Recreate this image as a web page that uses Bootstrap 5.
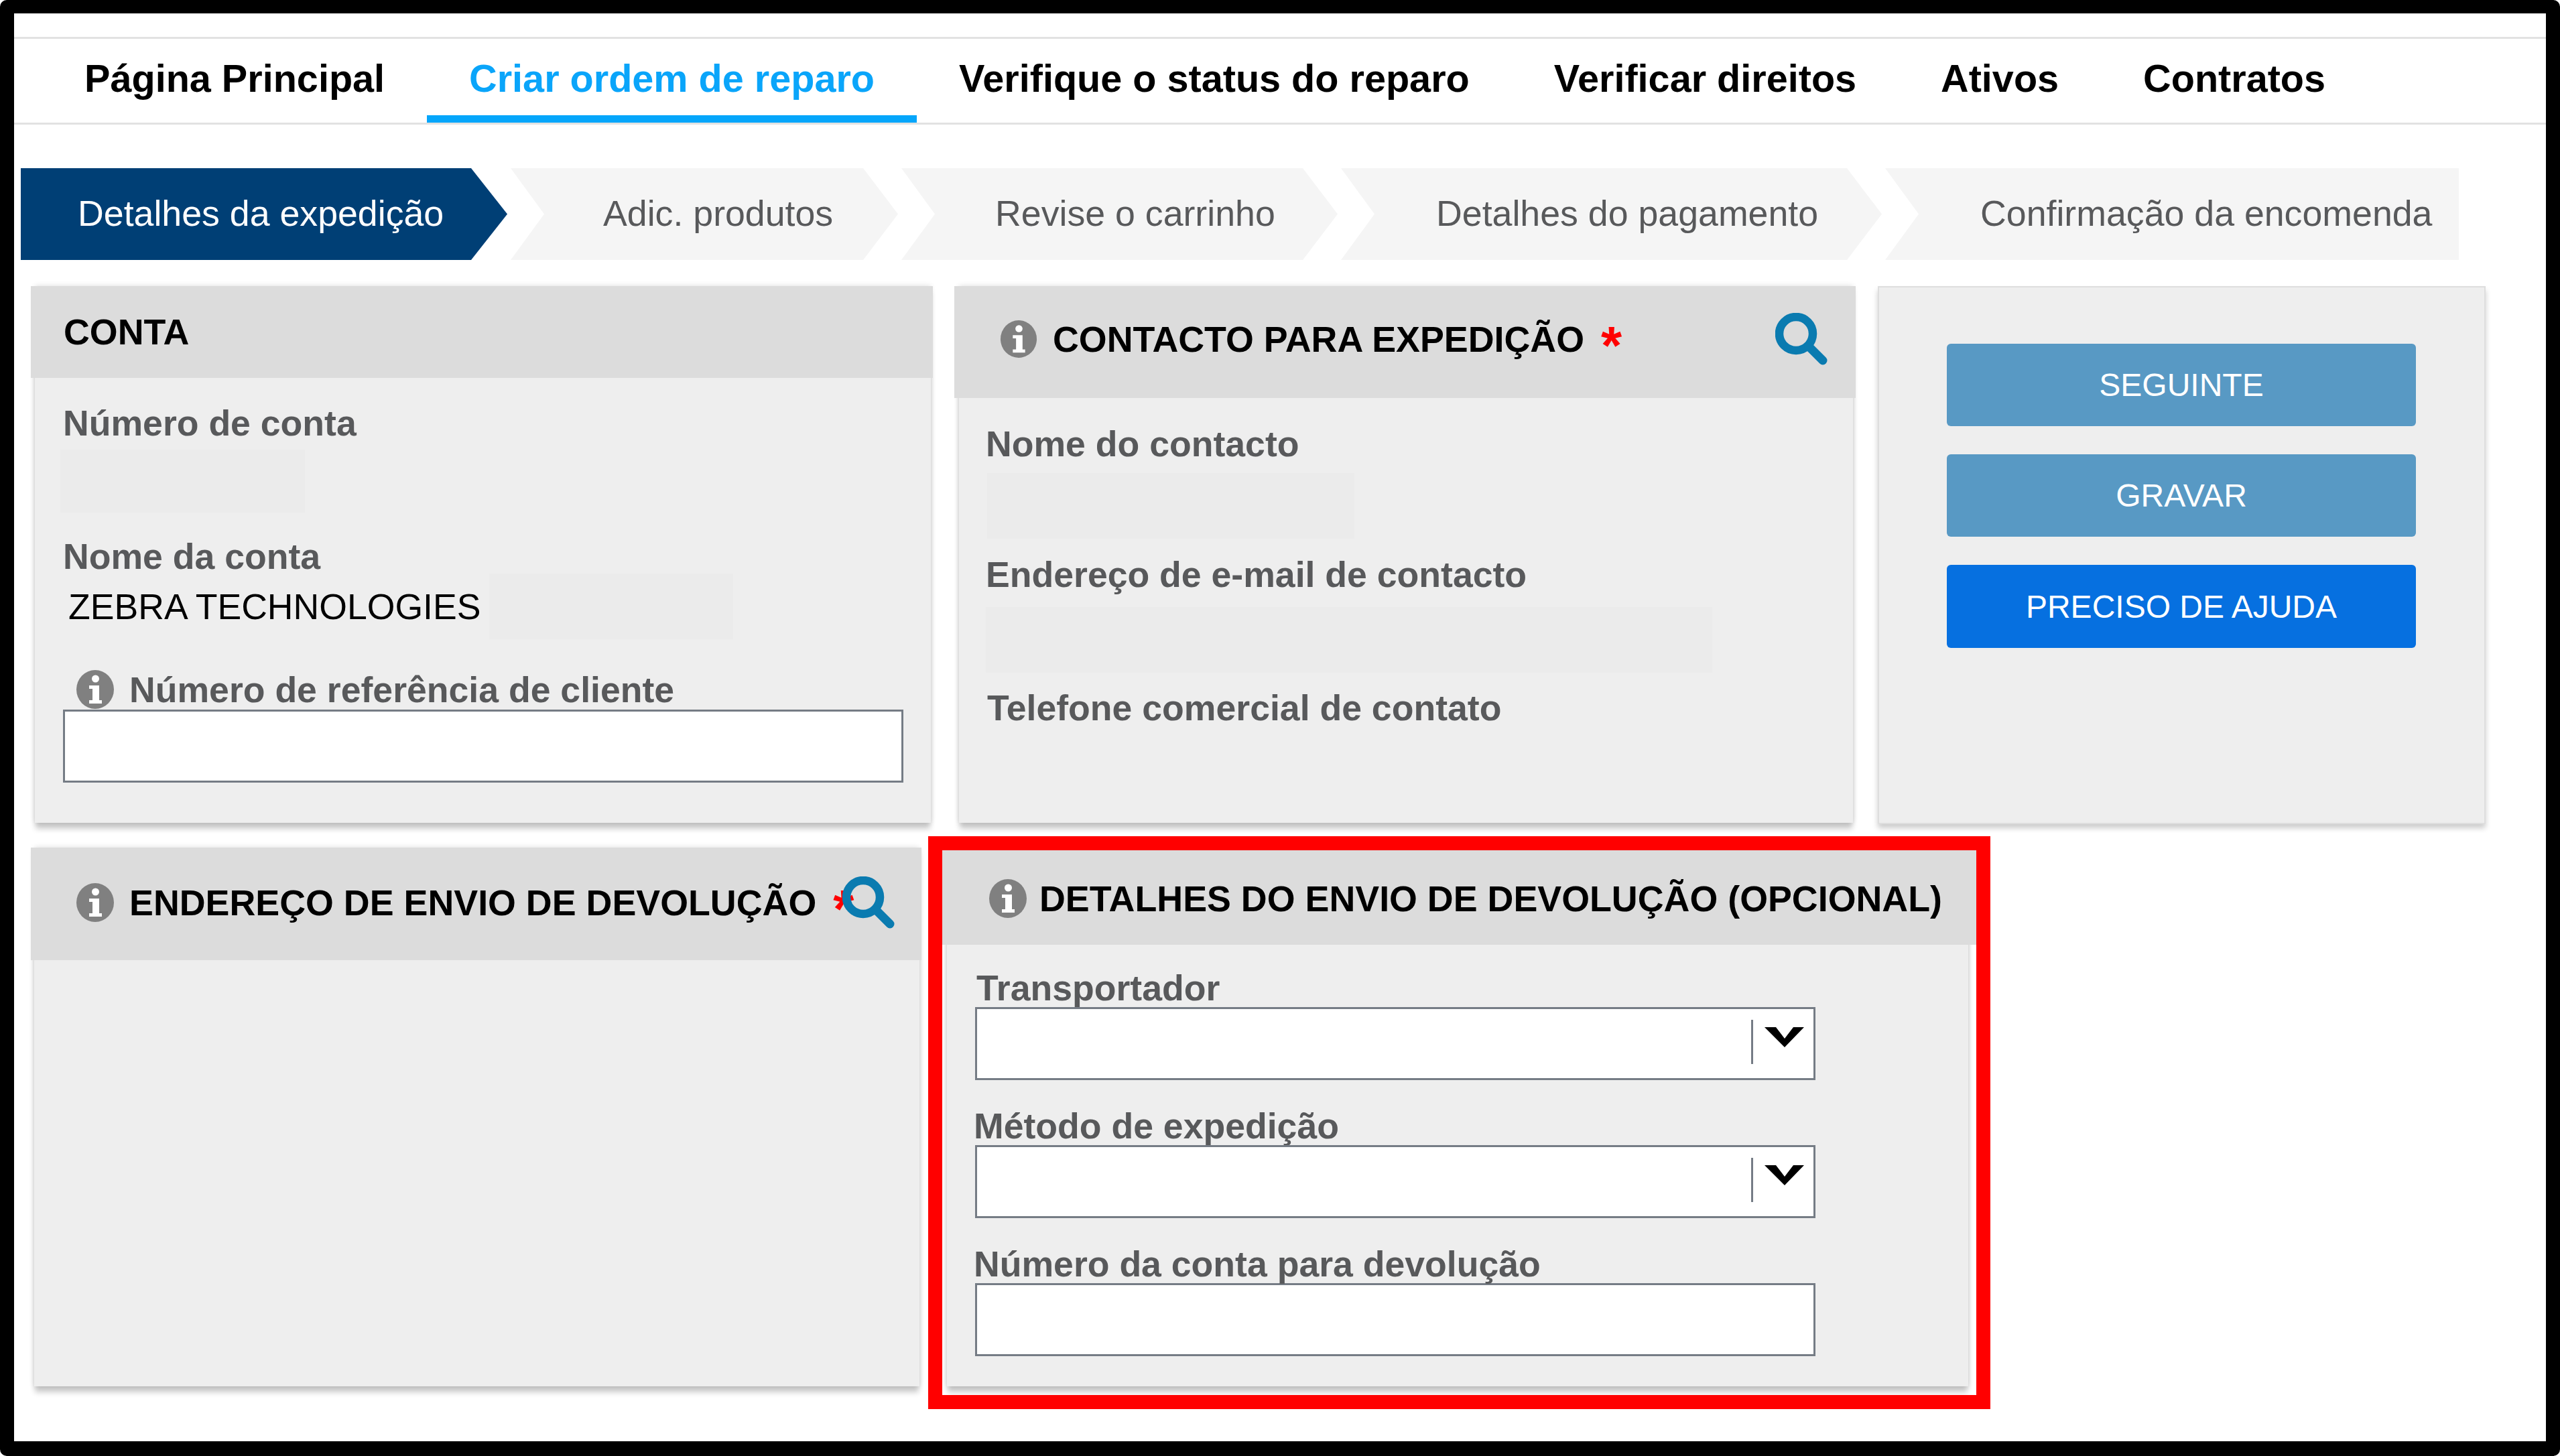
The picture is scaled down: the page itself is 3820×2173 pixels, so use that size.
<!DOCTYPE html>
<html lang="pt">
<head>
<meta charset="utf-8">
<title>Criar ordem de reparo</title>
<link href="https://cdn.jsdelivr.net/npm/bootstrap@5.3.0/dist/css/bootstrap.min.css" rel="stylesheet">
<style>
body{font-family:"Liberation Sans",Arial,sans-serif;background:#fff;color:#000}
.shot-frame{border-style:solid;border-color:#000;border-width:20px 21px 22px;border-radius:10px;height:2173px;overflow:hidden;padding-top:35px;background:#fff}
.top-tabs{border-top:3px solid #e2e2e2;border-bottom:3px solid #e2e2e2;padding-left:42px;height:131px}
.top-tabs .nav-link{font-size:57.6px;font-weight:700;line-height:64px;color:#000;padding:27px 63px 23px;border-bottom:11px solid transparent;white-space:nowrap}
.top-tabs .nav-link.active{color:#0aa5fa;border-bottom-color:#05a6fb}
.steps{margin:65px 0 39px 10px;gap:5px}
.step-item{height:137px;background:#f5f5f5;color:#58595b;font-size:53.7px;padding-left:138px;padding-bottom:2px;white-space:nowrap;clip-path:polygon(0 0,calc(100% - 52px) 0,100% 50%,calc(100% - 52px) 100%,0 100%,50px 50%)}
.step-1{width:726px;background:#003f75;color:#fff;padding-left:85px;clip-path:polygon(0 0,calc(100% - 54px) 0,100% 50%,calc(100% - 54px) 100%,0 100%)}
.step-2{width:578px}
.step-3{width:651px;padding-left:140px}
.step-4{width:807px;padding-left:142px}
.step-5{width:856px;padding-left:142px;clip-path:polygon(0 0,100% 0,100% 100%,0 100%,50px 50%)}
.row-one{padding-left:31px;gap:42px}
.row-two{padding-left:30px;margin-top:35px}
.panel-box{border:0;border-radius:0;background:#eee;box-shadow:0 10px 8px -1px rgba(0,0,0,.2),0 0 8px rgba(0,0,0,.14)}
.panel-box>.card-header{border:0;border-radius:0;background:#dcdcdc;padding:0;font-size:53.8px;font-weight:700;color:#000;white-space:nowrap}
.panel-box>.card-body{padding:0}
.fld-title{line-height:60px}
.fld-label{font-size:53.6px;font-weight:700;line-height:60px;color:#58595b;white-space:nowrap}
.fld-value{font-size:53.6px;line-height:60px;color:#000;white-space:nowrap}
.mask-patch{background:#ebebeb;height:98px}
.req-star{color:#f00;font-size:80px;font-weight:700;line-height:80px;margin-top:20px}
.fld-input.form-control,.fld-input.form-select{border:3px solid #757c85;border-radius:0;background:#fff;height:109px;box-shadow:none}
/* Conta */
.acct-card{width:1337px;height:801px}
.acct-card>.card-header{height:137px;margin:0 -3px 0 -6px;padding-left:49px;line-height:137px}
.acct-card>.card-body{padding:37px 0 0 42px}
.acct-mask-a{width:365px;height:94px;margin:10px 0 35px -4px}
.acct-value-row{height:98px;margin-top:-4px;margin-bottom:45px}
.acct-value-row .fld-value{margin-left:8px;width:630px}
.acct-mask-b{width:364px;margin-left:-2px}
.ref-label{margin-left:20px;gap:23px;height:60px;margin-bottom:0}
.acct-input{width:1254px;margin-left:0}
/* Contacto */
.contact-card{width:1334px;height:801px}
.contact-card>.card-header{height:167px;margin:0 -4px 0 -7px;padding:0 42px 10px 68px}
.contact-card>.card-body{padding:38px 0 0 40px}
.gap-title{gap:23px}
.contact-star{margin-left:2px}
.mag-end{margin-left:auto}
.contact-mask-a{width:548px;margin:14px 0 23px 2px}
.contact-mask-b{width:1084px;margin:19px 0 22px 0}
.phone-label{margin-left:2px}
/* Botões */
.action-card{width:907px;height:803px;background:#eee;border:2px solid #dedede;border-radius:0;box-shadow:0 6px 8px rgba(0,0,0,.2);padding:84px 102px 0 101px;margin-left:-5px;gap:42px;align-content:start}
.action-btn.btn{height:123px;border:0;border-radius:6px;color:#fff;font-size:48px;line-height:123px;padding:0;background:#5899c4}
.action-btn.btn-primary{background:#0670e0;height:124px}
/* Endereço */
.addr-card{width:1321px;height:804px;flex:none}
.addr-card>.card-header{height:168px;margin:0 -3px 0 -5px;padding:0 0 4px 68px}
.addr-star{margin-left:2px}
.addr-mag{margin-left:-40px;position:relative}
/* Detalhes */
.red-wrap{outline:21px solid #f00;width:1543px;height:813px;margin:4px 0 0 34px;overflow:hidden;padding:0 12px 0 7px;flex:none}
.ret-card{height:800px}
.ret-card>.card-header{height:141px;margin:0 -12px 0 -7px;padding:3px 0 0 70px}
.ret-card>.card-body{padding:36px 0 0 40px}
.gap-ret{gap:19px}
.ret-label{line-height:57px}
.ret-first{margin-left:4px}
.ret-field{width:1254px;margin-left:2px;margin-bottom:40px}
.sel-overlay{position:absolute;right:0;top:0;pointer-events:none}
.ret-select{background-image:none}
svg{display:block;flex:none}
</style>
</head>
<body>
<svg width="0" height="0" class="position-absolute">
<symbol id="info-i" viewBox="0 0 56 58"><ellipse cx="28" cy="29" rx="28" ry="29" fill="#808080"/><circle cx="28.5" cy="13" r="5.5" fill="#fff"/><path d="M19 23h15v22h4v5H19v-5h5V28h-5z" fill="#fff"/></symbol>
<symbol id="mag-i" viewBox="0 0 78 78"><circle cx="31" cy="31" r="25" fill="none" stroke="#0a7bb0" stroke-width="12.5"/><path d="M50 50l21 21" stroke="#0a7bb0" stroke-width="13" stroke-linecap="round"/></symbol>
</svg>
<div class="shot-frame">
  <ul class="nav top-tabs">
    <li class="nav-item"><a class="nav-link" href="#">Página Principal</a></li>
    <li class="nav-item"><a class="nav-link active" href="#">Criar ordem de reparo</a></li>
    <li class="nav-item"><a class="nav-link" href="#">Verifique o status do reparo</a></li>
    <li class="nav-item"><a class="nav-link" href="#">Verificar direitos</a></li>
    <li class="nav-item"><a class="nav-link" href="#">Ativos</a></li>
    <li class="nav-item"><a class="nav-link" href="#">Contratos</a></li>
  </ul>

  <div class="d-flex steps">
    <div class="step-item step-1 d-flex align-items-center">Detalhes da expedição</div>
    <div class="step-item step-2 d-flex align-items-center">Adic. produtos</div>
    <div class="step-item step-3 d-flex align-items-center">Revise o carrinho</div>
    <div class="step-item step-4 d-flex align-items-center">Detalhes do pagamento</div>
    <div class="step-item step-5 d-flex align-items-center">Confirmação da encomenda</div>
  </div>

  <div class="d-flex row-one">
    <div class="card panel-box acct-card flex-shrink-0">
      <div class="card-header">CONTA</div>
      <div class="card-body">
        <div class="fld-label">Número de conta</div>
        <div class="mask-patch acct-mask-a"></div>
        <div class="fld-label">Nome da conta</div>
        <div class="d-flex align-items-center acct-value-row">
          <div class="fld-value">ZEBRA TECHNOLOGIES</div>
          <div class="mask-patch acct-mask-b"></div>
        </div>
        <div class="d-flex align-items-center ref-label">
          <svg width="56" height="58"><use href="#info-i"/></svg>
          <div class="fld-label">Número de referência de cliente</div>
        </div>
        <input type="text" class="form-control fld-input acct-input" aria-label="Número de referência de cliente">
      </div>
    </div>

    <div class="card panel-box contact-card flex-shrink-0">
      <div class="card-header d-flex align-items-center gap-title">
        <svg width="56" height="56"><use href="#info-i"/></svg>
        <div class="fld-title">CONTACTO PARA EXPEDIÇÃO</div>
        <div class="req-star contact-star">*</div>
        <svg class="mag-end" width="78" height="78"><use href="#mag-i"/></svg>
      </div>
      <div class="card-body">
        <div class="fld-label">Nome do contacto</div>
        <div class="mask-patch contact-mask-a"></div>
        <div class="fld-label">Endereço de e-mail de contacto</div>
        <div class="mask-patch contact-mask-b"></div>
        <div class="fld-label phone-label">Telefone comercial de contato</div>
      </div>
    </div>

    <div class="d-grid action-card flex-shrink-0">
      <button type="button" class="btn action-btn">SEGUINTE</button>
      <button type="button" class="btn action-btn">GRAVAR</button>
      <button type="button" class="btn btn-primary action-btn">PRECISO DE AJUDA</button>
    </div>
  </div>

  <div class="d-flex row-two">
    <div class="card panel-box addr-card">
      <div class="card-header d-flex align-items-center gap-title">
        <svg width="56" height="58"><use href="#info-i"/></svg>
        <div class="fld-title">ENDEREÇO DE ENVIO DE DEVOLUÇÃO</div>
        <div class="req-star addr-star">*</div>
        <svg class="addr-mag" width="78" height="78"><use href="#mag-i"/></svg>
      </div>
      <div class="card-body"></div>
    </div>

    <div class="red-wrap">
      <div class="card panel-box ret-card">
        <div class="card-header d-flex align-items-center gap-ret">
          <svg width="56" height="58"><use href="#info-i"/></svg>
          <div class="fld-title">DETALHES DO ENVIO DE DEVOLUÇÃO (OPCIONAL)</div>
        </div>
        <div class="card-body">
          <div class="fld-label ret-label ret-first">Transportador</div>
          <div class="position-relative ret-field">
            <select class="form-select fld-input ret-select" aria-label="Transportador"><option></option></select>
            <svg class="sel-overlay" width="110" height="109" viewBox="0 0 110 109"><rect x="14" y="19" width="3" height="66" fill="#757c85"/><path d="M34 30h17l13 17 13-17h16L64 60z" fill="#000"/></svg>
          </div>
          <div class="fld-label ret-label">Método de expedição</div>
          <div class="position-relative ret-field">
            <select class="form-select fld-input ret-select" aria-label="Método de expedição"><option></option></select>
            <svg class="sel-overlay" width="110" height="109" viewBox="0 0 110 109"><rect x="14" y="19" width="3" height="66" fill="#757c85"/><path d="M34 30h17l13 17 13-17h16L64 60z" fill="#000"/></svg>
          </div>
          <div class="fld-label ret-label">Número da conta para devolução</div>
          <div class="ret-field">
            <input type="text" class="form-control fld-input" aria-label="Número da conta para devolução">
          </div>
        </div>
      </div>
    </div>
  </div>
</div>
<script src="https://cdn.jsdelivr.net/npm/bootstrap@5.3.0/dist/js/bootstrap.bundle.min.js"></script>
</body>
</html>
